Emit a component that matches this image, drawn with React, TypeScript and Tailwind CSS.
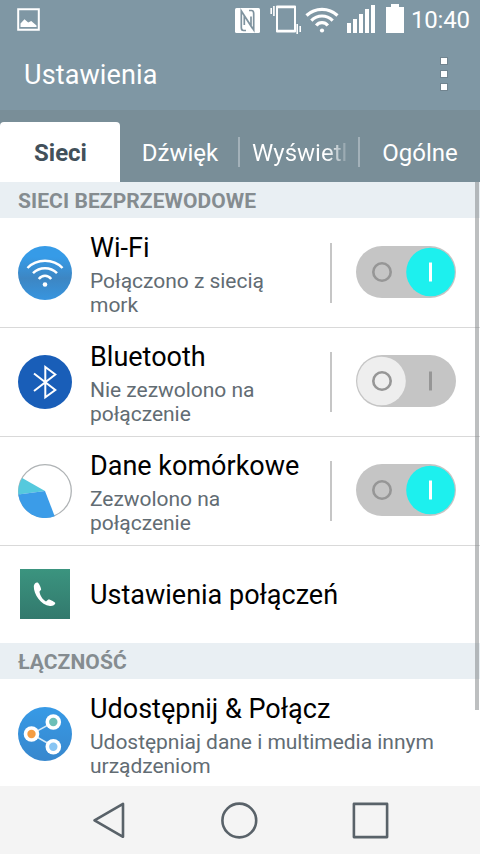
import type { ReactNode } from "react";

const PictureIcon = () => (
  <svg width="24" height="24" viewBox="0 0 24 24">
    <path d="M1.2 1.2h20.6v20.6H1.2z" fill="none" stroke="#fff" strokeWidth="2" />
    <path d="M3.5 19v-3.5l4-4.3 3.7 3.3 3-1.6 5.3 4.6V19z" fill="#fff" />
  </svg>
);

const NfcIcon = () => (
  <svg width="25" height="25" viewBox="0 0 25 25">
    <rect width="25" height="25" rx="1.5" fill="#fff" />
    <path
      d="M11 22.500H8.500Q6.300 22.500 6.300 19.500V3L16 18V8.500M14 2.500h2.500q2.200 0 2.200 3V22L9.300 7.500v9.500"
      fill="none"
      stroke="#7f939f"
      strokeWidth="1.700"
    />
  </svg>
);

const VibrateIcon = () => (
  <svg width="32" height="30" viewBox="0 0 32 30">
    <path d="M7 2.500h18v25H7z" fill="none" stroke="#fff" strokeWidth="2" strokeLinejoin="round" />
    <path d="M8 3.200h16M8 26.800h16" stroke="#fff" strokeWidth="2" />
    <path d="M1.200 4v6M3.900 2v10M27.200 20v10M30.200 22v6" stroke="#fff" strokeWidth="1.600" />
  </svg>
);

const StatusWifiIcon = () => (
  <svg width="34" height="28" viewBox="0 0 34 28" fill="none" stroke="#fff" strokeWidth="3.200">
    <path d="M1.500 10.500Q8 4.400 17 4.400t15.500 6.100" />
    <path d="M6.300 15.600Q11 11 17 11t10.700 4.600" />
    <path d="M11.200 20.400Q13.500 17.600 17 17.600t5.800 2.800" />
    <circle cx="17" cy="25.500" r="2.100" fill="#fff" stroke="none" />
  </svg>
);

const SignalIcon = () => (
  <svg width="28" height="28" viewBox="0 0 28 28" fill="#fff">
    <path d="M0 18h4v10H0zM6 14h4v14H6zM12 9h4v19h-4zM18 4h4v24h-4zM24 0h4v28h-4z" />
  </svg>
);

const BatteryIcon = () => (
  <svg width="18" height="29" viewBox="0 0 18 29" fill="#fff">
    <path d="M5 0h8v3h5v26H0V3h5z" />
  </svg>
);

const WifiIcon = () => (
  <svg width="54" height="54" viewBox="0 0 54 54" fill="none" stroke="#fff" strokeWidth="2.500">
    <defs>
      <linearGradient id="wifiBg" x1="0" y1="0" x2="0" y2="1">
        <stop offset="0.200" stopColor="#369be7" />
        <stop offset="0.600" stopColor="#3d86c3" />
        <stop offset="1" stopColor="#3795df" />
      </linearGradient>
    </defs>
    <circle cx="27" cy="27" r="27" fill="url(#wifiBg)" stroke="none" />
    <path d="M9.500 22Q16.500 14.800 27 14.800T44.500 22" />
    <path d="M15 27.200Q20 22.200 27 22.200t12 5" />
    <path d="M20.800 33Q23.300 29.800 27 29.800t6.200 3.200" />
    <circle cx="27" cy="38.500" r="2.300" fill="#fff" stroke="none" />
  </svg>
);

const BluetoothIcon = () => (
  <svg width="54" height="54" viewBox="0 0 54 54" fill="none" stroke="#fff" strokeWidth="2">
    <circle cx="27" cy="27" r="27" fill="#195eb8" stroke="none" />
    <path d="M16 18.500 37.300 35 27.300 42.300V12L37.300 19.500 16 36" />
  </svg>
);

const DataIcon = () => (
  <svg width="54" height="54" viewBox="0 0 54 54">
    <circle cx="27" cy="27" r="26.300" fill="#fff" stroke="#afb3b5" strokeWidth="1.300" />
    <path d="M27 27 4.200 14A26.700 26.700 0 0 0 .300 30.500z" fill="#55c9dd" />
    <path d="M27 27 .200 30.500A27 27 0 0 0 36.700 52.200z" fill="#3b9ce8" />
  </svg>
);

const PhoneIcon = () => (
  <svg width="54" height="54" viewBox="0 0 54 54">
    <defs>
      <linearGradient id="phoneBg" x1="0" y1="0" x2="0" y2="1">
        <stop offset="0" stopColor="#3b947f" />
        <stop offset="1" stopColor="#32796d" />
      </linearGradient>
    </defs>
    <path d="M2 2h50v50H2z" fill="url(#phoneBg)" />
    <path
      d="M19.500 15.500c-1.500-.500-3.500 1.500-3.700 3.500-.300 8.500 7.200 19 16.200 20 2.500.300 5-1 5.300-2.700.200-1-5.800-4.300-7-3.700l-2.300 1.800c-3-1-6.500-6.500-6.500-9.800l1.600-1.800c.500-1.200-2.400-7-3.600-7.300z"
      fill="#fff"
    />
  </svg>
);

const ShareIcon = () => (
  <svg width="54" height="54" viewBox="0 0 54 54">
    <defs>
      <linearGradient id="shareBg" x1="0" y1="0" x2="0" y2="1">
        <stop offset="0" stopColor="#379ae6" />
        <stop offset="1" stopColor="#3787cd" />
      </linearGradient>
    </defs>
    <circle cx="27" cy="27" r="27" fill="url(#shareBg)" />
    <path d="M35.500 15.200 13.500 27l22 12.500" fill="none" stroke="#d4e9f8" strokeWidth="1.500" />
    <g fill="#fff">
      <circle cx="35.300" cy="15" r="7.800" />
      <circle cx="13.500" cy="27" r="7.800" />
      <circle cx="35.300" cy="39.700" r="7.800" />
    </g>
    <circle cx="35.300" cy="15" r="4.200" fill="#6bbfb7" />
    <circle cx="13.500" cy="27" r="4.200" fill="#f59d42" />
    <circle cx="35.300" cy="39.700" r="4.200" fill="#88c5f3" />
  </svg>
);

const Toggle = ({ on }: { on: boolean }) => (
  <svg width="100" height="52" viewBox="0 0 100 52">
    <rect width="100" height="52" rx="26" fill="#c5c5c5" />
    <circle cx={on ? 74.5 : 25.5} cy="26" r="24.300" fill={on ? "#1df0ee" : "#eeeeee"} />
    <circle cx="26" cy="26" r="8.700" fill="none" stroke="#969696" strokeWidth="2.600" />
    <path d="M74.500 16.500v19" stroke={on ? "#fff" : "#969696"} strokeWidth="3" />
  </svg>
);

const SectionHeader = ({ title }: { title: string }) => (
  <h2 className="h-9 bg-[#e9eff3] pl-[18px] text-[21px] leading-[38px] font-bold tracking-[0.08px] text-[#858c90]">
    {title}
  </h2>
);

interface RowProps {
  icon: ReactNode;
  title: string;
  lines: string[];
  on?: boolean;
}

const SettingsRow = ({ icon, title, lines, on }: RowProps) => (
  <div className="flex h-[109px] items-center border-b border-[#d9d9d9] pr-6 pl-[18px]">
    {icon}
    <div className="ml-[18px] flex-1 pt-1 whitespace-nowrap">
      <h3 className="text-[27px] leading-7 text-black">{title}</h3>
      <p className="mt-[7px] text-[21px] leading-6 tracking-[-0.03px] text-[#626c73]">
        {lines.map((line) => (
          <span key={line} className="block">
            {line}
          </span>
        ))}
      </p>
    </div>
    {on !== undefined && (
      <div className="flex items-center gap-6">
        <div className="h-15 w-0.5 bg-[#c6c6c6]" />
        <div className="pb-0.5">
          <Toggle on={on} />
        </div>
      </div>
    )}
  </div>
);

const App = () => {
  return (
    <div className="flex h-[854px] w-[480px] flex-col overflow-hidden bg-white font-['Roboto',sans-serif]">
      <header className="bg-[#7f97a4] text-white">
        <div className="flex h-10 items-start">
          <div className="mt-2 ml-[17px] flex-1">
            <PictureIcon />
          </div>
          <div className="mt-2">
            <NfcIcon />
          </div>
          <div className="mt-1 ml-[10px]">
            <VibrateIcon />
          </div>
          <div className="mt-[5px] ml-[3px]">
            <StatusWifiIcon />
          </div>
          <div className="mt-[5px] ml-2">
            <SignalIcon />
          </div>
          <div className="mt-1 ml-[11px]">
            <BatteryIcon />
          </div>
          <div className="ml-[7px] w-[69px] text-[24px] leading-10 tracking-[-0.2px]">10:40</div>
        </div>
        <div className="flex h-[70px] items-center justify-between pr-8 pl-6">
          <h1 className="text-[27px] leading-8 tracking-[0.12px]">Ustawienia</h1>
          <div className="flex flex-col gap-[5px] pb-0.5">
            <span className="size-2 border border-[#71848f] bg-white" />
            <span className="size-2 border border-[#71848f] bg-white" />
            <span className="size-2 border border-[#71848f] bg-white" />
          </div>
        </div>
      </header>

      <nav className="flex h-[72px] items-end bg-[#798e98] text-[24px] leading-[62px] text-white">
        <div className="h-15 w-30 rounded-t-[4px] bg-white pl-px text-center font-bold text-[#42505a]">
          Sieci
        </div>
        <div className="h-15 w-[118px] pl-0.5 text-center">Dźwięk</div>
        <div className="mb-[15px] h-[30px] w-0.5 bg-[#a3b1b9]" />
        <div className="ml-3 h-15 w-[94px] overflow-hidden bg-linear-to-r from-white from-80% to-white/20 bg-clip-text text-transparent">
          Wyświetl
        </div>
        <div className="ml-3 mb-[15px] h-[30px] w-0.5 bg-[#a3b1b9]" />
        <div className="h-15 flex-1 text-center">Ogólne</div>
      </nav>

      <main className="relative h-[604px] overflow-hidden">
        <SectionHeader title="SIECI BEZPRZEWODOWE" />
        <div className="pt-px">
          <SettingsRow icon={<WifiIcon />} title="Wi-Fi" lines={["Połączono z siecią", "mork"]} on={true} />
          <SettingsRow icon={<BluetoothIcon />} title="Bluetooth" lines={["Nie zezwolono na", "połączenie"]} on={false} />
          <SettingsRow icon={<DataIcon />} title="Dane komórkowe" lines={["Zezwolono na", "połączenie"]} on={true} />
          <div className="flex h-[97px] items-center pb-px pl-[18px]">
            <PhoneIcon />
            <h3 className="mt-px ml-[18px] text-[27px] leading-8 text-black">Ustawienia połączeń</h3>
          </div>
        </div>
        <SectionHeader title="ŁĄCZNOŚĆ" />
        <div className="pt-px">
          <SettingsRow
            icon={<ShareIcon />}
            title="Udostępnij & Połącz"
            lines={["Udostępniaj dane i multimedia innym", "urządzeniom"]}
          />
        </div>
        <div className="absolute top-0 right-px h-[528px] w-1 bg-[#7b7f81]/50" />
      </main>

      <footer className="flex h-[68px] items-center bg-[#f4f4f4]">
        <svg className="ml-[92px]" width="34" height="38" viewBox="0 0 34 38">
          <path d="M31 2.800v33L2.500 19.300z" fill="none" stroke="#596269" strokeWidth="2.600" strokeLinejoin="round" />
        </svg>
        <svg className="ml-[94px]" width="38" height="38" viewBox="0 0 38 38">
          <circle cx="19.300" cy="19.500" r="16.900" fill="none" stroke="#596269" strokeWidth="2.600" />
        </svg>
        <svg className="ml-[93px]" width="38" height="38" viewBox="0 0 38 38">
          <path d="M2.900 2.900h33.200v33.200H2.900z" fill="none" stroke="#596269" strokeWidth="2.600" strokeLinejoin="round" />
        </svg>
      </footer>
    </div>
  );
};

export default App;
